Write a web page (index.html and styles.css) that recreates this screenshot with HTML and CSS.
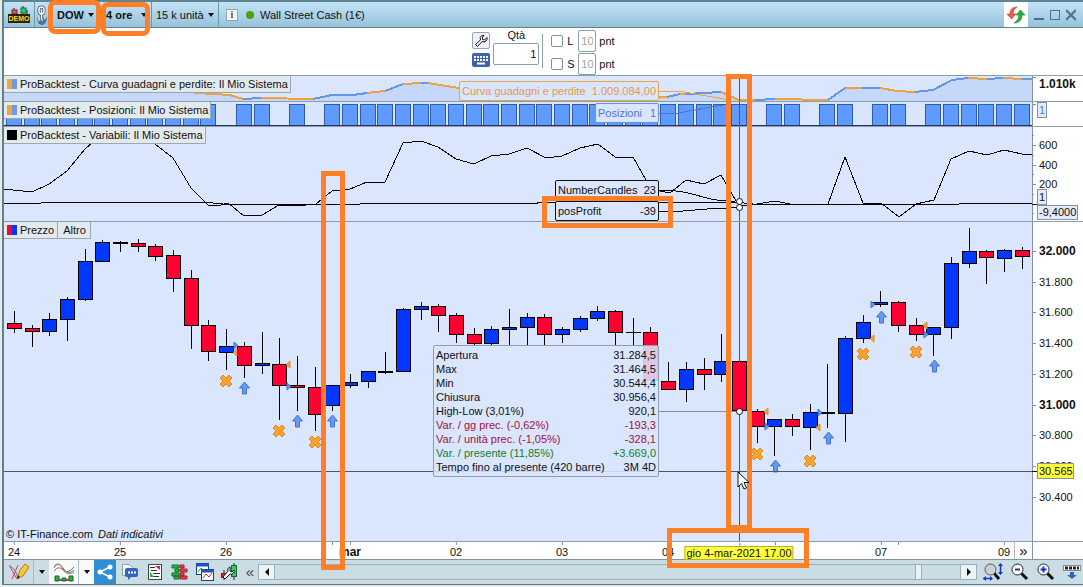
FILE: index.html
```html
<!DOCTYPE html>
<html lang="it">
<head>
  <meta charset="UTF-8" />
  <meta name="viewport" content="width=device-width, initial-scale=1.0" />
  <title>Wall Street Cash (1€)</title>
  <link rel="stylesheet" href="styles.css">
</head>
<body>
  <div class="app">
    <header class="titlebar">
      <div class="cell cell-demo">
        <svg width="22" height="18" viewBox="0 0 22 18">
          <path d="M6 2v8M15 0v9M19 4v5" stroke="#222" />
          <rect x="4" y="4" width="5" height="4" fill="#e05060" stroke="#7a2030" />
          <rect x="13" y="2" width="5" height="5" fill="#35c96a" stroke="#176b35" />
          <rect x="0" y="8" width="22" height="9" fill="#2a2408" />
          <text x="11" y="15" class="demo-text" text-anchor="middle">DEMO</text>
        </svg>
      </div>
      <div class="cell cell-link">
        <svg width="10" height="20" viewBox="0 0 10 20" fill="none">
          <g stroke="#3d4f5c" stroke-width="3">
            <rect x="2" y="2" width="5" height="7" rx="2.5" />
            <path d="M4.500 6v8" /><path d="M2 12v2q0 4 3 4t3-4v-2" />
          </g>
          <g stroke="#fff" stroke-width="1.500">
            <rect x="2" y="2" width="5" height="7" rx="2.500" />
            <path d="M4.500 6v8" /><path d="M2 12v2q0 4 3 4t3-4v-2" />
          </g>
          <path d="M2 16l3 3 4-5" stroke="#2f6fd0" stroke-width="2" />
        </svg>
      </div>
      <span class="drop drop-symbol"><select class="bold" aria-label="Simbolo"><option>DOW</option></select></span>
      <span class="drop drop-frame"><select class="bold" aria-label="Timeframe"><option>4 ore</option></select></span>
      <span class="drop drop-units"><select aria-label="Unità"><option>15 k unità</option></select></span>
      <button class="info" aria-label="Info">i</button>
      <span class="dot"></span>
      <span class="market">Wall Street Cash (1€)</span>
      <div class="window-buttons">
        <button class="refresh" aria-label="Aggiorna">
          <svg width="18" height="18" viewBox="0 0 18 18">
            <path d="M10 1C5 1 3 4 3 8H0l4.500 5L9 8H6c0-3 1-5 4-7z" fill="#ef5a5a" stroke="#b03a3a" stroke-width=".6" />
            <path d="M7 17c5 0 8-3 8-8h3l-4.500-5L9 9h3c0 3-1 5-5 8z" fill="#27b33a" stroke="#137a22" stroke-width=".6" />
          </svg>
        </button>
        <button aria-label="Riduci"><svg width="10" height="12"><path d="M0 10h10" stroke="#4c7186" stroke-width="2" /></svg></button>
        <button aria-label="Ingrandisci"><svg width="10" height="12"><rect x=".5" y="1.500" width="9" height="9" fill="none" stroke="#4c7186" /></svg></button>
        <button aria-label="Chiudi"><svg width="10" height="12"><path d="M0 1l10 10M10 1L0 11" stroke="#4c7186" stroke-width="2" /></svg></button>
      </div>
    </header>

    <form class="orderbar" onsubmit="event.preventDefault();">
      <div class="tools">
        <button class="tool-wrench" aria-label="Impostazioni">
          <svg width="14" height="14" viewBox="0 0 14 14"><path d="M8 1.500a3.500 3.500 0 0 0-1.500 4.500L1.500 10.500l2 2 4.500-5a3.500 3.500 0 0 0 5-4L10.500 6 8.500 5.500V3L10 1.500z" fill="#fff" stroke="#111" /></svg>
        </button>
        <button class="tool-keys" aria-label="Tastiera">
          <svg width="18" height="14" viewBox="0 0 18 14"><path d="M2 4h14M2 7h14" stroke="#fff" stroke-width="2" stroke-dasharray="2 1" /><path d="M5 10.500h8" stroke="#fff" stroke-width="2" /></svg>
        </button>
      </div>
      <div class="qty">
        <label for="qty">Qtà</label>
        <input id="qty" type="text" value="1" />
      </div>
      <div class="limits">
        <div class="limit">
          <input type="checkbox" id="limit" /><label for="limit">L</label>
          <input class="points" type="text" value="10" aria-label="Punti limite" /><span>pnt</span>
        </div>
        <div class="limit">
          <input type="checkbox" id="stop" /><label for="stop">S</label>
          <input class="points" type="text" value="10" aria-label="Punti stop" /><span>pnt</span>
        </div>
      </div>
    </form>

    <main class="charts">
      <section class="panel equity">
        <div class="plot">
          <svg id="equity" viewBox="4 76 1028 25" preserveAspectRatio="none"></svg>
          <div class="tab"><i class="swatch orange-blue"></i>ProBacktest - Curva guadagni e perdite: Il Mio Sistema</div>
          <div class="callout callout-equity"><span>Curva guadagni e perdite</span><span>1.009.084,00</span></div>
        </div>
        <svg class="axis" viewBox="1032 76 51 25">
          <path d="M1032 77.500h4" />
          <text class="major" x="1039" y="88">1.010k</text>
        </svg>
      </section>

      <section class="panel positions">
        <div class="plot">
          <svg id="positions" viewBox="4 102 1028 24" preserveAspectRatio="none"></svg>
          <div class="tab"><i class="swatch orange-blue"></i>ProBacktest - Posizioni: Il Mio Sistema</div>
          <div class="callout callout-positions"><span>Posizioni</span><span>1</span></div>
        </div>
        <svg class="axis" viewBox="1032 102 51 24">
          <path d="M1032 104.500h4" />
          <rect x="1037.500" y="102.500" width="9" height="15" />
          <text class="blue" x="1039" y="114">1</text>
        </svg>
      </section>

      <section class="panel variables">
        <div class="plot">
          <svg id="variables" viewBox="4 127 1028 94" preserveAspectRatio="none"></svg>
          <div class="tab"><i class="swatch black"></i>ProBacktest - Variabili: Il Mio Sistema</div>
          <div class="callout callout-candles"><span>NumberCandles</span><span>23</span></div>
          <div class="callout callout-profit"><span>posProfit</span><span>-39</span></div>
        </div>
        <svg class="axis" viewBox="1032 127 51 94">
          <path d="M1032 135.500h2M1032 145.500h4M1032 155.500h2M1032 165.500h4M1032 174.500h2M1032 184.500h4M1032 194.500h2M1032 213.500h2" />
          <path class="mark" d="M1032 204.500h5" />
          <text x="1039" y="149">600</text>
          <text x="1039" y="169">400</text>
          <text x="1039" y="188">200</text>
          <rect x="1037.500" y="189.500" width="9" height="15" />
          <text x="1039" y="201">1</text>
          <rect x="1037.500" y="205.500" width="40" height="14" />
          <text x="1039" y="216">-9,4000</text>
        </svg>
      </section>

      <section class="panel price">
        <div class="plot">
          <svg id="price" viewBox="4 222 1028 319" preserveAspectRatio="none"></svg>
          <div class="tab"><i class="swatch red-blue"></i>Prezzo<span class="other">Altro</span></div>
          <table class="tooltip">
            <tr><th>Apertura</th><td>31.284,5</td></tr>
            <tr><th>Max</th><td>31.464,5</td></tr>
            <tr><th>Min</th><td>30.544,4</td></tr>
            <tr><th>Chiusura</th><td>30.956,4</td></tr>
            <tr><th>High-Low (3,01%)</th><td>920,1</td></tr>
            <tr class="down"><th>Var. / gg prec. (-0,62%)</th><td>-193,3</td></tr>
            <tr class="down"><th>Var. / unità prec. (-1,05%)</th><td>-328,1</td></tr>
            <tr class="up"><th>Var. / presente (11,85%)</th><td>+3.669,0</td></tr>
            <tr><th>Tempo fino al presente (420 barre)</th><td>3M 4D</td></tr>
          </table>
          <div class="credits">© IT-Finance.com <em>Dati indicativi</em></div>
        </div>
        <svg class="axis" viewBox="1032 222 51 319">
          <path d="M1032 251.500h4M1032 282.500h4M1032 312.500h4M1032 343.500h4M1032 374.500h4M1032 405.500h4M1032 435.500h4M1032 466.500h4M1032 497.500h4" />
          <text class="major" x="1039" y="255">32.000</text>
          <text x="1039" y="286">31.800</text>
          <text x="1039" y="316">31.600</text>
          <text x="1039" y="347">31.400</text>
          <text x="1039" y="378">31.200</text>
          <text class="major" x="1039" y="409">31.000</text>
          <text x="1039" y="439">30.800</text>
          <text x="1039" y="470">30.600</text>
          <text x="1039" y="501">30.400</text>
          <path class="mark" d="M1032 471.500h5" />
          <rect class="yellow" x="1037.500" y="463.500" width="36" height="15" />
          <text x="1039" y="475">30.565</text>
        </svg>
      </section>

      <div class="timeline">
        <div class="dates" id="dates"></div>
        <button class="more" aria-label="Avanti">»</button>
        <div class="corner"></div>
      </div>
    </main>

    <footer class="toolbar">
      <button class="tb wide" aria-label="Disegno">
        <svg width="20" height="18" viewBox="0 0 20 18" fill="none">
          <path d="M0 2l8 14M3 16L9 2" stroke="#d0405a" /><path d="M1 3l5 4 3 8" stroke="#777" />
          <path d="M8 16l3-9 5-6 4 3-6 9z" fill="#f6c63c" stroke="#b07f1a" /><path d="M8 16l1-4 2 2z" fill="#222" />
        </svg>
      </button>
      <button class="tb caret" aria-label="Menu disegno"></button>
      <button class="tb wide white" aria-label="Indicatori">
        <svg width="20" height="20" viewBox="0 0 20 20" fill="none">
          <path d="M0 6q4-8 9 0t11 2" stroke="#2f9a4a" /><path d="M0 9q5-6 9-1t11-3" stroke="#d8405a" />
          <path d="M0 4q5-5 9 3t11 3" stroke="#888" />
          <path d="M1 14h4v5H1zM8 16h4v3H8zM15 14h4v5h-4z" fill="#26b24a" stroke="#126a28" /><path d="M5 17h3v2H5zM12 17h3v2h-3z" fill="#e0243c" />
        </svg>
      </button>
      <button class="tb caret white" aria-label="Menu indicatori"></button>
      <button class="tb share" aria-label="Condividi">
        <svg width="16" height="16" viewBox="0 0 16 16"><path d="M13 3L3 8l10 5" stroke="#fff" fill="none" stroke-width="1.500" /><circle cx="3" cy="8" r="2.500" fill="#fff" /><circle cx="13" cy="3" r="2.500" fill="#fff" /><circle cx="13" cy="13" r="2.500" fill="#fff" /></svg>
      </button>
      <button class="tb" aria-label="Commenti">
        <svg width="18" height="18" viewBox="0 0 18 18"><path d="M1.500 1.500h7l3 3v8h-10z" fill="#f5f9fc" stroke="#8aa0b4" /><path d="M6 5h9q2 0 2 2v5q0 2-2 2h-5l-3 3v-3H6q-2 0-2-2V7q0-2 2-2z" fill="#3166c0" /><path d="M7 9.500h8" stroke="#fff" stroke-width="2" stroke-dasharray="2 1" /></svg>
      </button>
      <button class="tb" aria-label="Ordini">
        <svg width="14" height="16" viewBox="0 0 14 16"><rect x=".5" y=".5" width="13" height="15" fill="#fff" stroke="#444" /><path d="M2 3.500h5M3 6.500h6M5 9.500h7M4 12.500h7" stroke="#333" /><path d="M7 2h5v4z" fill="#e0243c" /><path d="M2 8l4 5H2z" fill="#26b24a" /></svg>
      </button>
      <button class="tb" aria-label="Book">
        <svg width="17" height="16" viewBox="0 0 17 16"><path d="M1 1h7v3H1zM4 5h4v3H4zM1 9h7v3H1zM3 12h5v3H3z" fill="#22c04c" stroke="#0d6a26" /><path d="M9 1h4v3H9zM9 5h7v3H9zM9 9h4v3H9zM9 12h7v3H9z" fill="#f03a4a" stroke="#98202c" /></svg>
      </button>
      <button class="tb" aria-label="Finestre">
        <svg width="18" height="18" viewBox="0 0 18 18"><rect x=".5" y=".5" width="12" height="11" fill="#fff" stroke="#1c3e86" /><path d="M0 2h13" stroke="#1f55b8" stroke-width="3" /><path d="M2 9l3-4 3 3" fill="none" stroke="#26a04a" /><rect x="5.500" y="6.500" width="12" height="11" fill="#fff" stroke="#1c3e86" /><path d="M5 8h13" stroke="#1f55b8" stroke-width="3" /><path d="M7 15l3-4 3 3 3-4" fill="none" stroke="#d0303c" /></svg>
      </button>
      <button class="tb" aria-label="Backtest">
        <svg width="17" height="18" viewBox="0 0 17 18"><path d="M13 0v17M3 7v10" stroke="#222" /><rect x="10.500" y="2.500" width="5" height="11" fill="#35c96a" stroke="#14692f" /><rect x=".5" y="10.500" width="5" height="4" fill="#e0243c" stroke="#7d1522" /><path d="M9 4a3 3 0 0 0-2 4l-5 6 2 2 5-5a3 3 0 0 0 4-4l-2 2-2-1V6z" fill="#fff" stroke="#111" /></svg>
      </button>
      <button class="collapse" aria-label="Comprimi">«</button>
      <div class="scrollbar">
        <button class="arrow left" aria-label="Scorri a sinistra"></button>
        <div class="track"><div class="thumb"></div></div>
        <button class="arrow right" aria-label="Scorri a destra"></button>
      </div>
      <div class="zooms">
        <button aria-label="Zoom automatico">
          <svg width="20" height="18" viewBox="0 0 20 18"><path d="M11 10l5 6" stroke="#111" stroke-width="3" /><circle cx="7.500" cy="6.500" r="5.500" fill="#cfcfcf" stroke="#555" /><path d="M0 15.500h9M17.500 1v10" stroke="#1730d8" stroke-width="1.500" /><path d="M0 15.500l3-2.500v5zM10 15.500L7 13v5zM17.500 0L15 3h5zM17.500 12L15 9h5z" fill="#1730d8" /></svg>
        </button>
        <button aria-label="Riduci zoom">
          <svg width="18" height="18" viewBox="0 0 18 18"><path d="M10 10l6 6" stroke="#111" stroke-width="3" /><circle cx="6.500" cy="6.500" r="5.500" fill="#fff" stroke="#222" /><path d="M4 6.500h5" stroke="#1730b8" stroke-width="2" /></svg>
        </button>
        <button aria-label="Aumenta zoom">
          <svg width="18" height="18" viewBox="0 0 18 18"><path d="M10 10l6 6" stroke="#111" stroke-width="3" /><circle cx="6.500" cy="6.500" r="5.500" fill="#fff" stroke="#222" /><path d="M3.500 6.500h6M6.500 3.500v6" stroke="#1730d8" stroke-width="2" /></svg>
        </button>
        <button aria-label="Mostra barra">
          <svg width="18" height="18" viewBox="0 0 18 18"><rect x=".5" y="2.500" width="17" height="5" fill="#fff" stroke="#889" /><path d="M2 5h14" stroke="#222" stroke-width="3" stroke-dasharray="3 1" /><path d="M7 9h4v3h3l-5 4-5-4h3z" fill="#2f66b8" /></svg>
        </button>
      </div>
    </footer>

    <div class="highlight round hl-symbol"></div>
    <div class="highlight round hl-frame"></div>
    <div class="highlight hl-profit"></div>
    <div class="highlight hl-month"></div>
    <div class="highlight hl-cursor"></div>
    <div class="highlight hl-date"></div>
    <svg class="pointer" width="13" height="20" viewBox="0 0 13 20"><path d="M1 1v15l3.500-3.500L7 18l2.500-1L7 11.500h5z" fill="#fff" stroke="#111" /></svg>
  </div>

  <script>
    const STEP = 17.68;
    const barX = i => Math.round(14 + STEP * i);

    // [body top, body bottom, wick top, wick bottom, u = up / d = down]
    const candles = [
      [323,329,311,333,'d'], [328,332,325,347,'d'], [319,332,313,336,'u'], [299,320,297,341,'u'],
      [261,300,249,301,'u'], [242,262,240,262,'u'], [242,244,241,252,'u'], [243,247,239,252,'d'],
      [246,257,244,261,'d'], [255,279,250,292,'d'], [278,326,270,349,'d'], [325,352,320,361,'d'],
      [346,353,329,370,'u'], [346,366,342,378,'d'], [363,366,332,374,'u'], [364,386,338,420,'d'],
      [385,388,356,411,'d'], [387,415,367,431,'d'], [385,406,385,411,'u'], [382,386,374,388,'u'],
      [371,382,371,388,'u'], [371,373,352,374,'u'], [309,372,308,372,'u'], [306,310,302,320,'u'],
      [306,316,304,332,'d'], [315,335,313,343,'d'], [334,344,328,346,'d'], [329,344,326,346,'u'],
      [327,330,309,346,'u'], [317,328,313,346,'u'], [317,335,314,346,'d'], [329,335,327,343,'u'],
      [318,330,316,332,'u'], [311,319,306,321,'u'], [311,333,310,346,'d'], [332,333,318,346,'u'],
      [332,381,327,381,'d'], [381,390,362,390,'d'], [369,390,362,402,'u'], [369,375,358,390,'d'],
      [361,375,334,382,'u'], [361,411,333,475,'d'], [411,427,409,443,'d'], [419,427,419,456,'u'],
      [419,427,414,436,'d'], [412,428,404,450,'u'], [412,414,364,428,'u'], [338,414,336,442,'u'],
      [322,339,315,343,'u'], [302,305,291,307,'u'], [302,326,301,332,'d'], [325,335,318,341,'d'],
      [327,335,327,356,'u'], [263,328,257,339,'u'], [251,264,228,268,'u'], [251,258,250,284,'d'],
      [250,259,249,272,'u'], [250,257,247,269,'d']
    ];
    const flat = [12, 15, 17, 42, 45, 48, 51];

    // o = orange stretch, b = blue stretch, drawn up to the point
    const equity = [
      ['o',173,89], ['o',197,93], ['o',230,95], ['o',243,99], ['b',261,98], ['o',313,99], ['b',332,95],
      ['b',353,95], ['b',367,93], ['o',385,91], ['b',403,84], ['o',421,83], ['b',428,83], ['o',440,85], ['o',459,88],
      ['o',562,92], ['o',658,97], ['o',667,97], ['b',680,94], ['o',686,94], ['b',721,92], ['o',739,100],
      ['o',755,100], ['b',775,99], ['o',828,100], ['b',845,88], ['o',862,88], ['b',880,88], ['o',897,91],
      ['o',915,92], ['b',933,90], ['b',952,80], ['b',968,78], ['o',987,79], ['b',1003,78], ['o',1022,79], ['b',1032,79]
    ];
    const profit = '4,189 32,192 49,184 67,171 85,149 95,140 155,144 173,158 191,188 208,205 221,205 228,203 '
      + '244,216 262,215 279,205 306,205 316,204 332,191 350,189 367,182 385,182 403,143 421,141 438,147 456,159 '
      + '474,164 491,156 509,154 527,148 546,158 562,156 580,148 598,144 615,157 633,157 646,180 660,191 670,193 '
      + '686,180 704,184 721,175 739,206 757,204 775,201 790,204 828,204 845,157 863,203 881,203 899,217 916,204 '
      + '934,200 951,159 969,151 987,155 1004,150 1022,154 1032,154';

    let out = '';
    const area = equity.map(p => p[1] + ',' + p[2]).join(' ');
    out += `<polygon class="area" points="4,82 100,84 ${area} 1032,101 4,101" />`;
    for (let i = 1; i < equity.length; i++) {
      const [, x0, y0] = equity[i - 1], [c, x1, y1] = equity[i];
      out += `<path class="curve ${c}" d="M${x0} ${y0}L${x1} ${y1}" />`;
    }
    out += '<path class="lead-o" d="M658 91h20L730 100" /><path class="cross" d="M739.500 76v25" />';
    document.getElementById('equity').innerHTML = out;

    out = '';
    candles.forEach((c, i) => {
      if (!flat.includes(i)) out += `<rect class="pos" x="${barX(i) - 7.5}" y="104.500" width="15" height="21" />`;
    });
    out += '<path class="base" d="M4 125.500h1028" /><path class="lead-b" d="M658 113h20L723 105" /><path class="cross" d="M739.500 102v24" />';
    document.getElementById('positions').innerHTML = out;

    document.getElementById('variables').innerHTML =
      `<path class="cross" d="M739.500 127v94" />
       <polyline class="line" points="${profit}" />
       <polyline class="line" points="4,203.500 40,203.500 42,202.500 208,202.500 228,204.500 350,204.500 370,203.500 535,203.500 540,202.500 739,202.500 757,204.500 958,204.500 960,203.500 1032,203.500" />
       <polyline class="line" points="658,190.500 673,190.500 686,192.500 713,199.500 739,202.500" />
       <polyline class="line" points="658,211.500 677,211.500 713,208.500 739,207.500" />
       <circle class="knob" cx="739.500" cy="201.500" r="3" /><circle class="knob" cx="739.500" cy="207.500" r="3" />`;

    out = '<path class="level" d="M658 411.500h81" />';
    candles.forEach(([t, b, h, l, k], i) => {
      const x = barX(i);
      out += `<path class="wick" d="M${x + .5} ${h}V${l}" />`;
      out += b - t < 3
        ? `<rect x="${x - 7}" y="${t}" width="15" height="${b - t}" />`
        : `<rect class="body ${k}" x="${x - 6.5}" y="${t + .5}" width="14" height="${b - t - 1}" />`;
    });
    [[244,388],[297,421],[332,421],[775,466],[828,438],[881,317],[934,366]].forEach(([x, y]) => {
      out += `<path class="buy" d="M${x + .5} ${y - 6}l5 6h-3v6h-4v-6h-3z" />`;
    });
    [[226,380],[279,430],[315,441],[757,453],[810,460],[863,353],[916,351]].forEach(([x, y]) => {
      out += `<path class="exit" d="M${x - 3} ${y - 5}l3 3 3-3 3 3-3 3 3 3-3 3-3-3-3 3-3-3 3-3-3-3z" />`;
    });
    [[236,345],[289,386],[767,426],[820,412],[873,304],[926,334]].forEach(([x, y]) => {
      out += `<path class="in" d="M${x - 2} ${y - 3}v7l4-3.500z" />`;
    });
    [[235,352],[288,364],[766,411],[818,427],[872,338],[925,325]].forEach(([x, y]) => {
      out += `<path class="out" d="M${x + 2} ${y - 3}v7l-4-3.500z" />`;
    });
    out += `<path class="cross" d="M4 471.500h1028M739.500 222v319" /><circle class="knob" cx="739.500" cy="411.500" r="3" />`;
    document.getElementById('price').innerHTML = out;

    const days = [[14,'24'],[120,'25'],[226,'26'],[332,''],[350,'mar','bold'],[456,'02'],[562,'03'],[668,'04'],
      [739,'gio 4-mar-2021 17.00','now'],[775,''],[881,'07'],[898,''],[1004,'09']];
    document.getElementById('dates').innerHTML = days.map(([x, text, cls]) =>
      `<span class="date ${cls || ''}" style="left: ${(x - 4) / 1028 * 100}%">${text}</span>`).join('');
  </script>
</body>
</html>
```

FILE: styles.css
```css
* {
  box-sizing: border-box;
}
body {
  margin: 0;
  padding-left: 2px;
  background: #e4eceb;
  color: #111;
  font-family: "Liberation Sans", Arial, sans-serif;
  font-size: 11px;
}
button, input, select {
  font: inherit;
  color: inherit;
  margin: 0;
}
button {
  padding: 0;
  border: none;
  background: none;
}
svg {
  display: block;
}
.app {
  position: relative;
  border-left: 2px solid #647f88;
}

/* title bar */
.titlebar {
  display: flex;
  align-items: center;
  height: 28px;
  border-top: 2px solid #5f8390;
  border-bottom: 1px solid #5e8396;
  background: linear-gradient(#c2e4f8, #98c1d9);
}
.cell {
  display: flex;
  align-items: center;
  justify-content: center;
  align-self: stretch;
  border-right: 1px solid #6f97ab;
}
.cell-demo {
  width: 31px;
}
.cell-link {
  width: 14px;
  border-right: none;
}
.demo-text {
  font: bold 7px "Liberation Sans", Arial, sans-serif;
  fill: #ffd83a;
}
.drop {
  position: relative;
  display: flex;
  align-items: center;
  align-self: stretch;
  padding: 0 8px;
}
.drop::after {
  content: "";
  position: absolute;
  right: 4px;
  top: 11px;
  border: 3px solid transparent;
  border-top: 4px solid #111;
  border-bottom: none;
}
.drop select {
  appearance: none;
  width: 100%;
  padding: 0;
  border: none;
  background: none;
}
.drop-symbol {
  width: 49px;
}
.drop-frame {
  width: 53px;
}
.drop-units {
  width: 68px;
  padding: 0 4px;
  border-left: 1px solid #6f97ab;
  border-right: 1px solid #6f97ab;
}
.drop .bold {
  font-weight: bold;
}
.info {
  width: 12px;
  height: 12px;
  margin-left: 7px;
  border: 1px solid #9aa7ae;
  background: #f4f6f6;
  color: #555;
  font: bold 10px/10px "Liberation Serif", serif;
}
.dot {
  width: 8px;
  height: 8px;
  margin: 0 6px 0 8px;
  border-radius: 50%;
  background: #4aa312;
}
.window-buttons {
  display: flex;
  align-items: center;
  align-self: stretch;
  gap: 6px;
  margin-left: auto;
  padding-right: 7px;
}
.refresh {
  display: flex;
  align-items: center;
  justify-content: center;
  align-self: stretch;
  width: 24px;
  background: #fff;
}

/* order bar */
.orderbar {
  display: flex;
  justify-content: center;
  height: 48px;
  border-bottom: 1px solid #8fa0a8;
  background: #fff;
}
.tools {
  display: flex;
  flex-direction: column;
  gap: 4px;
  padding-top: 4px;
}
.tool-wrench {
  display: flex;
  align-items: center;
  justify-content: center;
  width: 18px;
  height: 17px;
  border: 1px solid #9aa4b4;
  border-radius: 2px;
  background: #f1f2f8;
}
.tool-keys {
  width: 18px;
  height: 14px;
  border-radius: 2px;
  background: #3c64ae;
}
.qty {
  display: flex;
  flex-direction: column;
  align-items: center;
  width: 52px;
}
.qty label {
  line-height: 15px;
}
.qty input {
  width: 46px;
  height: 22px;
  padding: 0 2px;
  border: 1px solid #8a9ea8;
  border-radius: 2px;
  text-align: right;
}
.limits {
  position: relative;
  display: flex;
  flex-direction: column;
  padding: 1px 0 0 9px;
}
.limits::before {
  content: "";
  position: absolute;
  left: 0;
  top: 6px;
  height: 34px;
  border-left: 1px solid #8a9ea8;
}
.limit {
  display: flex;
  align-items: center;
  height: 23px;
}
.limit input[type="checkbox"] {
  appearance: none;
  width: 12px;
  height: 12px;
  margin-right: 4px;
  border: 1px solid #7d919b;
  border-radius: 2px;
  background: #fff;
}
.limit label {
  width: 11px;
}
.points {
  width: 18px;
  height: 22px;
  margin-right: 3px;
  padding: 0 2px;
  border: 1px solid #8a9ea8;
  border-radius: 2px;
  color: #a2a2a2;
}

/* charts */
.charts {
  background: #fff;
}
.panel {
  display: grid;
  grid-template-columns: 1fr 51px;
  border-bottom: 1px solid #8d9cab;
}
.plot {
  position: relative;
  min-width: 0;
  background: #dae5fe;
}
.plot > svg {
  width: 100%;
  shape-rendering: crispEdges;
}
.equity svg {
  height: 25px;
}
.positions svg {
  height: 24px;
}
.variables svg {
  height: 94px;
}
.price svg {
  height: 319px;
}
.axis {
  width: 51px;
  box-shadow: inset 1px 0 #8292a0;
  fill: #111;
}
.axis path {
  stroke: #8292a0;
}
.axis .mark {
  stroke: #111;
}
.axis rect {
  fill: #e4eafc;
  stroke: #8292a0;
}
.axis .yellow {
  fill: #ffff3c;
}
.axis .blue {
  fill: #4b7ed0;
}
.axis .major {
  font-size: 12px;
  font-weight: bold;
}
.tab {
  position: absolute;
  left: 0;
  top: 0;
  display: flex;
  align-items: center;
  height: 17px;
  padding: 0 2px 0 3px;
  border-right: 1px solid #9aa9b1;
  border-bottom: 1px solid #9aa9b1;
  background: #e3eaee;
}
.swatch {
  width: 10px;
  height: 10px;
  margin-right: 3px;
}
.orange-blue {
  background: linear-gradient(90deg, #f0a63c 50%, #6a9ae8 50%);
}
.red-blue {
  background: linear-gradient(90deg, #ff0033 50%, #0038ff 50%);
}
.black {
  background: #000;
}
.other {
  margin-left: 3px;
  padding: 2px 2px 2px 5px;
  border-left: 1px solid #9aa9b1;
}
.area {
  fill: #c5d8fa;
}
.curve {
  fill: none;
  stroke-width: 2;
}
.curve.o {
  stroke: #f0a040;
}
.curve.b {
  stroke: #6495e6;
}
.lead-o, .lead-b {
  fill: none;
  stroke: #e9a44c;
}
.lead-b {
  stroke: #4377c8;
}
.cross {
  stroke: #46586c;
}
.pos {
  fill: #5f9bff;
  stroke: #2c5cab;
}
.base {
  stroke: #24356e;
}
.line {
  fill: none;
  stroke: #000;
}
.knob {
  fill: #fff;
  stroke: #111;
  shape-rendering: auto;
}
.level {
  stroke: #8292a0;
}
.wick {
  stroke: #000;
}
.body {
  stroke: #000;
}
.body.u {
  fill: #0038ff;
}
.body.d {
  fill: #ff0033;
}
.buy, .exit, .in, .out {
  fill: #6699f4;
  stroke: #4475cc;
  shape-rendering: auto;
}
.exit, .out {
  fill: #ffa22c;
  stroke: #d8892c;
}
.callout {
  position: absolute;
  right: 373px;
  display: flex;
  align-items: center;
  justify-content: space-between;
  height: 20px;
  padding: 0 2px;
  border: 1px solid #111;
  border-radius: 2px;
  background: #dae5fe;
}
.callout-equity {
  top: 5px;
  width: 200px;
  border-color: #e9a44c;
  color: #e39a45;
}
.callout-positions {
  top: 1px;
  width: 64px;
  border-color: #6a94d8;
  color: #4b7ac8;
}
.callout-candles {
  top: 53px;
  width: 104px;
}
.callout-profit {
  top: 74px;
  width: 104px;
}
.tooltip {
  position: absolute;
  right: 373px;
  top: 123px;
  width: 226px;
  padding: 2px;
  border: 1px solid #8e9db3;
  border-radius: 2px;
  border-spacing: 0;
  background: rgba(218, 229, 254, 0.88);
}
.tooltip th, .tooltip td {
  height: 14px;
  padding: 0;
  line-height: 14px;
  font-weight: normal;
  text-align: left;
  white-space: nowrap;
}
.tooltip td {
  text-align: right;
}
.down {
  color: #a3103c;
}
.up {
  color: #14802a;
}
.credits {
  position: absolute;
  left: 2px;
  bottom: 0;
  line-height: 13px;
}
.credits em {
  margin-left: 2px;
}

/* time axis */
.timeline {
  display: grid;
  grid-template-columns: 1fr 18px 51px;
  height: 17px;
}
.dates {
  position: relative;
  margin-right: -18px;
}
.date {
  position: absolute;
  top: 4px;
  transform: translateX(-50%);
  line-height: 13px;
  white-space: nowrap;
}
.date::before {
  content: "";
  position: absolute;
  left: 50%;
  top: -4px;
  height: 3px;
  border-left: 1px solid #8292a0;
}
.date.bold {
  font-size: 12px;
  font-weight: bold;
}
.now {
  padding: 0 1px;
  border: 1px solid #b5b52a;
  background: #ffff3c;
  line-height: 12px;
}
.more {
  position: relative;
  border-left: 1px solid #b5bcc2;
  background: #fff;
  font-size: 15px;
  line-height: 14px;
}
.corner {
  border-left: 1px solid #8292a0;
}

/* bottom toolbar */
.toolbar {
  display: flex;
  align-items: center;
  height: 26px;
  border-top: 1px solid #7f949e;
  border-bottom: 1px solid #5f7780;
  background: #cbdde4;
}
.tb {
  display: flex;
  align-items: center;
  justify-content: center;
  align-self: stretch;
  flex: none;
  width: 25px;
}
.tb.wide {
  width: 30px;
  border-right: 1px solid #a9bcc5;
}
.tb.caret {
  width: 15px;
}
.tb.caret::before {
  content: "";
  border: 3px solid transparent;
  border-top: 4px solid #111;
  border-bottom: none;
}
.tb.white {
  background: #f8fafb;
}
.tb.share {
  width: 22px;
  margin-right: 1px;
  background: #2f8fd2;
}
.collapse {
  width: 16px;
  font-size: 15px;
  line-height: 16px;
  color: #444;
}
.scrollbar {
  display: flex;
  flex: 1;
  height: 16px;
  border: 1px solid #9db1bb;
}
.arrow {
  display: flex;
  align-items: center;
  justify-content: center;
  width: 15px;
  background: #edf4f7;
}
.arrow::before {
  content: "";
  border: 4px solid transparent;
}
.arrow.left::before {
  border-right-color: #111;
  border-left: none;
}
.arrow.right::before {
  border-left-color: #111;
  border-right: none;
}
.track {
  display: flex;
  justify-content: flex-end;
  flex: 1;
  padding-right: 38px;
  border: solid #9db1bb;
  border-width: 0 1px;
}
.thumb {
  width: 7px;
  border: solid #9db1bb;
  border-width: 0 1px;
  background: #e9f2f6;
}
.zooms {
  display: flex;
  gap: 8px;
  padding: 0 2px 0 6px;
}

/* highlights drawn over the window */
.highlight {
  position: absolute;
  border: 5px solid #ff7f27;
  pointer-events: none;
}
.highlight.round {
  border-radius: 7px;
}
.hl-symbol {
  left: 44px;
  top: 0;
  width: 53px;
  height: 34px;
}
.hl-frame {
  left: 97px;
  top: 2px;
  width: 49px;
  height: 34px;
}
.hl-profit {
  left: 538px;
  top: 196px;
  width: 131px;
  height: 32px;
}
.hl-month {
  left: 317px;
  top: 171px;
  width: 24px;
  height: 399px;
}
.hl-cursor {
  left: 722px;
  top: 74px;
  width: 26px;
  height: 456px;
}
.hl-date {
  left: 663px;
  top: 528px;
  width: 142px;
  height: 40px;
}
.pointer {
  position: absolute;
  left: 733px;
  top: 471px;
}
```
